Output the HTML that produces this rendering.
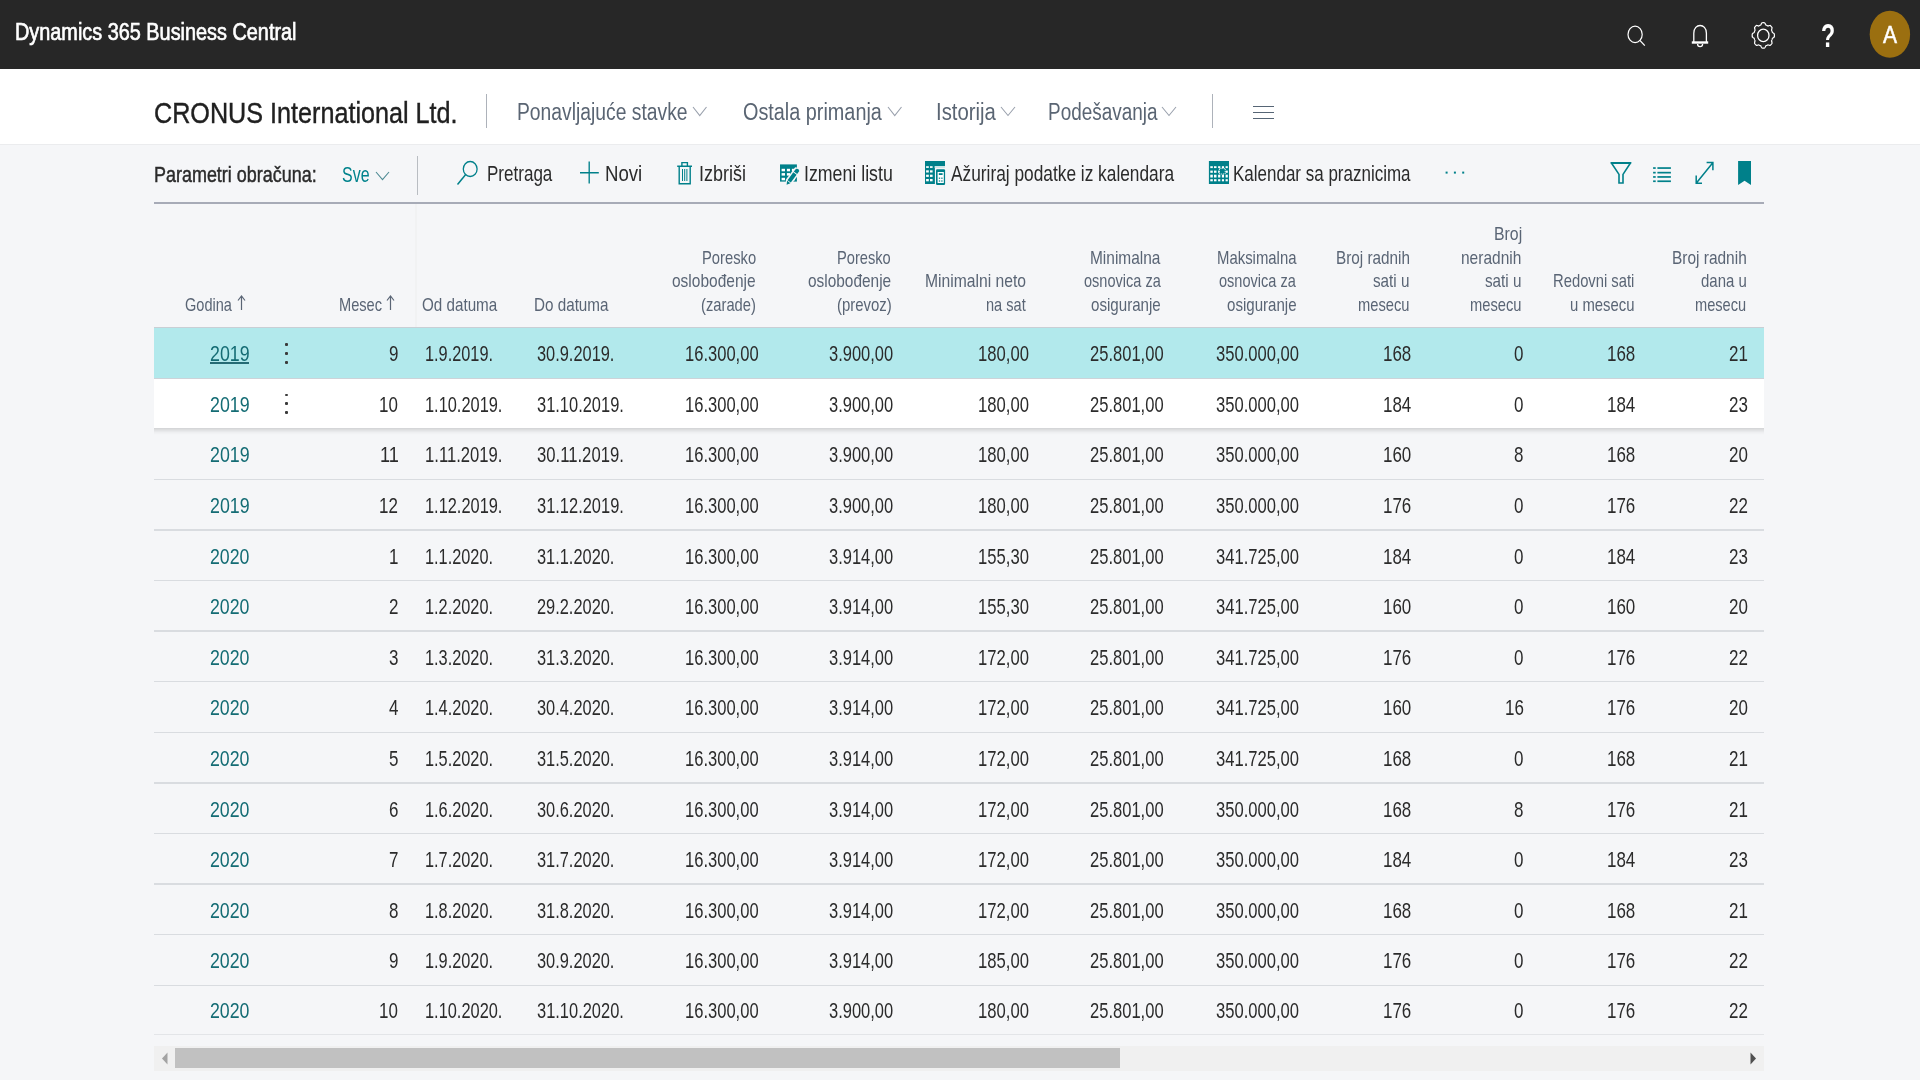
<!DOCTYPE html>
<html><head><meta charset="utf-8"><title>Dynamics 365 Business Central</title>
<style>
html,body{margin:0;padding:0;}
body{width:1920px;height:1080px;overflow:hidden;background:#f5f6f8;position:relative;font-family:"Liberation Sans",sans-serif;}
.t{filter:blur(0.4px);position:absolute;white-space:nowrap;line-height:1em;transform-origin:0 0;display:block;}
.r{position:absolute;display:block;}
svg.r{filter:blur(0.3px);}
</style></head><body>
<div class="r" style="left:0px;top:0px;width:1920px;height:69px;background:#272727;"></div>
<span class="t" style="left:15.41px;top:21px;font-size:23px;transform:scaleX(0.8635);color:#fff;-webkit-text-stroke:0.65px #fff;">Dynamics 365 Business Central</span>
<div class="r" style="left:0px;top:69px;width:1920px;height:75px;background:#ffffff;"></div>
<div class="r" style="left:0px;top:144px;width:1920px;height:1px;background:#ebecee;"></div>
<span class="t" style="left:153.94px;top:99px;font-size:29px;transform:scaleX(0.8679);color:#202020;-webkit-text-stroke:0.4px #202020;">CRONUS International Ltd.</span>
<div class="r" style="left:485.6px;top:94px;width:1.3px;height:34px;background:#adb2ba;"></div>
<div class="r" style="left:1211.9px;top:94px;width:1.3px;height:34px;background:#adb2ba;"></div>
<span class="t" style="left:517.26px;top:101px;font-size:23px;transform:scaleX(0.8391);color:#5a6573;">Ponavljajuće stavke</span>
<svg class="r" style="left:691.5px;top:106.3px" width="15.5" height="10.5"><polyline points="1,1 7.75,9.5 14.5,1" fill="none" stroke="#9aa1ad" stroke-width="1.1"/></svg>
<span class="t" style="left:743.11px;top:101px;font-size:23px;transform:scaleX(0.8621);color:#5a6573;">Ostala primanja</span>
<svg class="r" style="left:886.5px;top:106.3px" width="15.5" height="10.5"><polyline points="1,1 7.75,9.5 14.5,1" fill="none" stroke="#9aa1ad" stroke-width="1.1"/></svg>
<span class="t" style="left:935.67px;top:101px;font-size:23px;transform:scaleX(0.8825);color:#5a6573;">Istorija</span>
<svg class="r" style="left:999.5px;top:106.3px" width="16.0" height="10.5"><polyline points="1,1 8.0,9.5 15.0,1" fill="none" stroke="#9aa1ad" stroke-width="1.1"/></svg>
<span class="t" style="left:1047.98px;top:101px;font-size:23px;transform:scaleX(0.8234);color:#5a6573;">Podešavanja</span>
<svg class="r" style="left:1161px;top:106.3px" width="16" height="10.5"><polyline points="1,1 8.0,9.5 15,1" fill="none" stroke="#9aa1ad" stroke-width="1.1"/></svg>
<div class="r" style="left:1253px;top:105.8px;width:20.7px;height:1.4px;background:#566575;"></div>
<div class="r" style="left:1253px;top:111.7px;width:20.7px;height:1.4px;background:#566575;"></div>
<div class="r" style="left:1253px;top:117.8px;width:20.7px;height:1.4px;background:#566575;"></div>
<span class="t" style="left:153.56px;top:165px;font-size:21.5px;transform:scaleX(0.8350);color:#2b2b2b;-webkit-text-stroke:0.45px #2b2b2b;">Parametri obračuna:</span>
<span class="t" style="left:342.48px;top:165px;font-size:21.5px;transform:scaleX(0.7425);color:#00838c;">Sve</span>
<svg class="r" style="left:374.8px;top:171.2px" width="15.0" height="9.600000000000023"><polyline points="1,1 7.5,8.600000000000023 14.0,1" fill="none" stroke="#4f8b94" stroke-width="1.1"/></svg>
<div class="r" style="left:416.6px;top:156px;width:1.4px;height:39px;background:#b9bdc2;"></div>
<span class="t" style="left:486.64px;top:164px;font-size:21.5px;transform:scaleX(0.7922);color:#2b2b2b;">Pretraga</span>
<span class="t" style="left:604.51px;top:164px;font-size:21.5px;transform:scaleX(0.8662);color:#2b2b2b;">Novi</span>
<span class="t" style="left:698.98px;top:164px;font-size:21.5px;transform:scaleX(0.8374);color:#2b2b2b;">Izbriši</span>
<span class="t" style="left:803.60px;top:164px;font-size:21.5px;transform:scaleX(0.8256);color:#2b2b2b;">Izmeni listu</span>
<span class="t" style="left:950.70px;top:164px;font-size:21.5px;transform:scaleX(0.8046);color:#2b2b2b;">Ažuriraj podatke iz kalendara</span>
<span class="t" style="left:1233.14px;top:164px;font-size:21.5px;transform:scaleX(0.7903);color:#2b2b2b;">Kalendar sa praznicima</span>
<svg class="r" style="left:1600px;top:0px" width="320" height="69" viewBox="1600 0 320 69" preserveAspectRatio="none"><ellipse cx="1635.1" cy="34.4" rx="7.1" ry="8.2" fill="none" stroke="#ffffff" stroke-width="1.2"/><path d="M1639.9 40.4 L1644.8 45.6" stroke="#ffffff" stroke-width="1.3" fill="none"/><path d="M1693.8 42 V33.2 C1693.8 22.9 1706.4 22.9 1706.4 33.2 V42" fill="none" stroke="#ffffff" stroke-width="1.3"/><rect x="1691.8" y="41.3" width="16.4" height="2.4" fill="#ffffff"/><path d="M1697.6 44 C1697.6 47.4 1702.6 47.4 1702.6 44" fill="none" stroke="#ffffff" stroke-width="1.3"/><path d="M1763.30 22.70 L1763.74 22.71 L1764.17 22.74 L1764.60 22.79 L1764.98 23.27 L1765.30 23.88 L1765.59 24.49 L1765.86 25.01 L1766.22 25.13 L1766.57 25.27 L1766.91 25.43 L1767.25 25.60 L1767.58 25.78 L1767.91 25.98 L1768.42 25.84 L1769.00 25.63 L1769.61 25.47 L1770.17 25.43 L1770.51 25.74 L1770.83 26.07 L1771.15 26.42 L1771.45 26.78 L1771.74 27.15 L1772.02 27.54 L1771.98 28.18 L1771.84 28.87 L1771.66 29.54 L1771.53 30.13 L1771.71 30.50 L1771.87 30.88 L1772.02 31.27 L1772.15 31.66 L1772.27 32.06 L1772.38 32.47 L1772.83 32.78 L1773.37 33.11 L1773.90 33.48 L1774.32 33.91 L1774.37 34.40 L1774.39 34.90 L1774.40 35.40 L1774.39 35.90 L1774.37 36.40 L1774.32 36.89 L1773.90 37.32 L1773.37 37.69 L1772.83 38.02 L1772.38 38.33 L1772.27 38.74 L1772.15 39.14 L1772.02 39.53 L1771.87 39.92 L1771.71 40.30 L1771.53 40.67 L1771.66 41.26 L1771.84 41.93 L1771.98 42.62 L1772.02 43.26 L1771.74 43.65 L1771.45 44.02 L1771.15 44.38 L1770.83 44.73 L1770.51 45.06 L1770.17 45.37 L1769.61 45.33 L1769.00 45.17 L1768.42 44.96 L1767.91 44.82 L1767.58 45.02 L1767.25 45.20 L1766.91 45.37 L1766.57 45.53 L1766.22 45.67 L1765.86 45.79 L1765.59 46.31 L1765.30 46.92 L1764.98 47.53 L1764.60 48.01 L1764.17 48.06 L1763.74 48.09 L1763.30 48.10 L1762.86 48.09 L1762.43 48.06 L1762.00 48.01 L1761.62 47.53 L1761.30 46.92 L1761.01 46.31 L1760.74 45.79 L1760.38 45.67 L1760.03 45.53 L1759.69 45.37 L1759.35 45.20 L1759.02 45.02 L1758.69 44.82 L1758.18 44.96 L1757.60 45.17 L1756.99 45.33 L1756.43 45.37 L1756.09 45.06 L1755.77 44.73 L1755.45 44.38 L1755.15 44.02 L1754.86 43.65 L1754.58 43.26 L1754.62 42.62 L1754.76 41.93 L1754.94 41.26 L1755.07 40.67 L1754.89 40.30 L1754.73 39.92 L1754.58 39.53 L1754.45 39.14 L1754.33 38.74 L1754.22 38.33 L1753.77 38.02 L1753.23 37.69 L1752.70 37.32 L1752.28 36.89 L1752.23 36.40 L1752.21 35.90 L1752.20 35.40 L1752.21 34.90 L1752.23 34.40 L1752.28 33.91 L1752.70 33.48 L1753.23 33.11 L1753.77 32.78 L1754.22 32.47 L1754.33 32.06 L1754.45 31.66 L1754.58 31.27 L1754.73 30.88 L1754.89 30.50 L1755.07 30.13 L1754.94 29.54 L1754.76 28.87 L1754.62 28.18 L1754.58 27.54 L1754.86 27.15 L1755.15 26.78 L1755.45 26.42 L1755.77 26.07 L1756.09 25.74 L1756.43 25.43 L1756.99 25.47 L1757.60 25.63 L1758.18 25.84 L1758.69 25.98 L1759.02 25.78 L1759.35 25.60 L1759.69 25.43 L1760.03 25.27 L1760.38 25.13 L1760.74 25.01 L1761.01 24.49 L1761.30 23.88 L1761.62 23.27 L1762.00 22.79 L1762.43 22.74 L1762.86 22.71 Z" fill="none" stroke="#ffffff" stroke-width="1.2"/><ellipse cx="1763.3" cy="35.4" rx="5.7" ry="6.2" fill="none" stroke="#ffffff" stroke-width="1.3"/><ellipse cx="1889.9" cy="34.3" rx="20.2" ry="23.5" fill="#9b6f10"/></svg>
<svg class="r" style="left:440px;top:150px" width="1340" height="45" viewBox="440 150 1340 45" preserveAspectRatio="none"><ellipse cx="470.2" cy="169" rx="6.9" ry="7.5" fill="none" stroke="#00808a" stroke-width="1.3"/><path d="M465.5 174.8 L457.5 184.5" fill="none" stroke="#00808a" stroke-width="1.5"/><path d="M580 172.7 H598.8 M589.2 161.5 V183.6" fill="none" stroke="#00808a" stroke-width="1.35"/><path d="M677.2 166.3 H692 M681.9 166 V162.6 H687.4 V166 M679.2 166.5 V183.8 H690.2 V166.5" fill="none" stroke="#00808a" stroke-width="1.4"/><path d="M682.5 169 V181 M684.7 169 V181 M686.9 169 V181" fill="none" stroke="#00808a" stroke-width="1"/><rect x="780" y="164.4" width="16.9" height="17.2" fill="#00808a"/><rect x="781.6" y="168.8" width="3.40" height="2.50" fill="#ffffff"/><rect x="781.6" y="173.1" width="3.40" height="2.50" fill="#ffffff"/><rect x="781.6" y="177.8" width="3.40" height="2.50" fill="#ffffff"/><rect x="786.9" y="168.8" width="3.10" height="2.50" fill="#ffffff"/><rect x="786.9" y="173.1" width="3.10" height="2.50" fill="#ffffff"/><rect x="786.9" y="177.8" width="3.10" height="2.50" fill="#ffffff"/><rect x="791.9" y="168.8" width="3.10" height="2.50" fill="#ffffff"/><rect x="791.9" y="173.1" width="3.10" height="2.50" fill="#ffffff"/><rect x="791.9" y="177.8" width="3.10" height="2.50" fill="#ffffff"/><path d="M785.88 185.76 L791.63 184.05 L800.92 171.52 L799.11 167.94 L795.16 167.24 L785.86 179.77 Z" fill="#f5f6f8"/><path d="M786.60 184.80 L790.39 183.13 L787.10 180.69 Z M790.81 182.57 L796.59 174.78 L793.30 172.34 L787.52 180.13 Z M797.13 174.06 L799.33 171.09 L798.28 169.06 L796.04 168.64 L793.83 171.61 Z" fill="#00808a"/><rect x="925" y="161" width="20" height="23" fill="#00808a"/><rect x="926.1" y="166.2" width="2.70" height="1.70" fill="#ffffff"/><rect x="926.1" y="170.3" width="2.70" height="2.20" fill="#ffffff"/><rect x="926.1" y="174.7" width="2.70" height="2.20" fill="#ffffff"/><rect x="926.1" y="179" width="2.70" height="2.30" fill="#ffffff"/><rect x="930" y="166.2" width="2.60" height="1.70" fill="#ffffff"/><rect x="930" y="170.3" width="2.60" height="2.20" fill="#ffffff"/><rect x="930" y="174.7" width="2.60" height="2.20" fill="#ffffff"/><rect x="930" y="179" width="2.60" height="2.30" fill="#ffffff"/><rect x="934.6" y="166" width="10.4" height="2" fill="#cfe6e8"/><rect x="934.9" y="168" width="11" height="17.5" fill="#f5f6f8"/><rect x="936" y="169.2" width="9.1" height="15.8" rx="1.2" fill="#00808a"/><rect x="937.6" y="172" width="6.2" height="11" fill="#ffffff"/><rect x="938.8" y="173.2" width="3.8" height="1.8" fill="#00808a"/><rect x="938.8" y="177.6" width="1.40" height="1.20" fill="#00808a"/><rect x="938.8" y="180.4" width="1.40" height="1.20" fill="#00808a"/><rect x="941.2" y="177.6" width="1.40" height="1.20" fill="#00808a"/><rect x="941.2" y="180.4" width="1.40" height="1.20" fill="#00808a"/><rect x="1208.9" y="161" width="20.1" height="23" fill="#00808a"/><rect x="1210.3" y="166.2" width="2.50" height="1.90" fill="#ffffff"/><rect x="1210.3" y="170.6" width="2.50" height="2.20" fill="#ffffff"/><rect x="1210.3" y="174.7" width="2.50" height="2.80" fill="#ffffff"/><rect x="1210.3" y="179.2" width="2.50" height="2.10" fill="#ffffff"/><rect x="1214" y="166.2" width="2.50" height="1.90" fill="#ffffff"/><rect x="1214" y="170.6" width="2.50" height="2.20" fill="#ffffff"/><rect x="1214" y="174.7" width="2.50" height="2.80" fill="#ffffff"/><rect x="1214" y="179.2" width="2.50" height="2.10" fill="#ffffff"/><rect x="1218.1" y="166.2" width="2.20" height="1.90" fill="#ffffff"/><rect x="1218.1" y="170.6" width="2.20" height="2.20" fill="#ffffff"/><rect x="1218.1" y="174.7" width="2.20" height="2.80" fill="#ffffff"/><rect x="1218.1" y="179.2" width="2.20" height="2.10" fill="#ffffff"/><rect x="1221.9" y="166.2" width="2.10" height="1.90" fill="#ffffff"/><rect x="1221.9" y="170.6" width="2.10" height="2.20" fill="#ffffff"/><rect x="1221.9" y="174.7" width="2.10" height="2.80" fill="#ffffff"/><rect x="1221.9" y="179.2" width="2.10" height="2.10" fill="#ffffff"/><rect x="1225.6" y="166.2" width="2.20" height="1.90" fill="#ffffff"/><rect x="1225.6" y="170.6" width="2.20" height="2.20" fill="#ffffff"/><rect x="1225.6" y="174.7" width="2.20" height="2.80" fill="#ffffff"/><rect x="1225.6" y="179.2" width="2.20" height="2.10" fill="#ffffff"/><rect x="1219.4" y="168.4" width="5.8" height="5.6" fill="#00808a" stroke="#ffffff" stroke-width="0.9" stroke-dasharray="1.2 0.9"/><rect x="1445.6" y="171.6" width="2" height="2" fill="#00808a"/><rect x="1453.9" y="171.6" width="2" height="2" fill="#00808a"/><rect x="1462.2" y="171.6" width="2" height="2" fill="#00808a"/><path d="M1611.6 163.2 H1630.3 L1623 174.4 V183 H1619 V174.4 Z" fill="none" stroke="#00808a" stroke-width="1.6" stroke-linejoin="miter"/><rect x="1610.8" y="162" width="20.3" height="2" fill="#00808a"/><rect x="1653.1" y="167.2" width="2.6" height="1.7" fill="#00808a"/><rect x="1657.4" y="167.2" width="13.5" height="1.7" fill="#00808a"/><rect x="1653.1" y="171.79999999999998" width="2.6" height="1.7" fill="#00808a"/><rect x="1657.4" y="171.79999999999998" width="13.5" height="1.7" fill="#00808a"/><rect x="1653.1" y="176.1" width="2.6" height="1.7" fill="#00808a"/><rect x="1657.4" y="176.1" width="13.5" height="1.7" fill="#00808a"/><rect x="1653.1" y="180.39999999999998" width="2.6" height="1.7" fill="#00808a"/><rect x="1657.4" y="180.39999999999998" width="13.5" height="1.7" fill="#00808a"/><path d="M1696.4 183 L1712.8 162.7 M1706.6 162.6 H1712.9 V170.2 M1696.2 175.6 V183.2 H1702" fill="none" stroke="#00808a" stroke-width="1.5"/><path d="M1738.1 161 H1751 V185 L1744.55 180.8 L1738.1 185 Z" fill="#00808a"/></svg>
<span class="t" style="left:1820.96px;top:20px;font-size:32.5px;transform:scaleX(0.7119);font-weight:bold;color:#fff;">?</span>
<span class="t" style="left:1882.60px;top:23px;font-size:24px;transform:scaleX(0.8772);color:#fff;-webkit-text-stroke:0.5px #fff;">A</span>
<div class="r" style="left:154px;top:202px;width:1610px;height:2px;background:#a7abb7;"></div>
<span class="t" style="left:185.07px;top:295px;font-size:19px;transform:scaleX(0.7659);color:#5a6575;">Godina</span>
<span class="t" style="left:339.33px;top:295px;font-size:19px;transform:scaleX(0.7691);color:#5a6575;">Mesec</span>
<span class="t" style="left:422.32px;top:295px;font-size:19px;transform:scaleX(0.8005);color:#5a6575;">Od datuma</span>
<span class="t" style="left:534.28px;top:295px;font-size:19px;transform:scaleX(0.8016);color:#5a6575;">Do datuma</span>
<svg class="r" style="left:236.8px;top:295px" width="9" height="16"><path d="M4.5 1 V15 M1 5.5 L4.5 1 L8 5.5" fill="none" stroke="#5a6575" stroke-width="1.2"/></svg>
<svg class="r" style="left:385.8px;top:295px" width="9" height="16"><path d="M4.5 1 V15 M1 5.5 L4.5 1 L8 5.5" fill="none" stroke="#5a6575" stroke-width="1.2"/></svg>
<span class="t" style="left:701.82px;top:248px;font-size:19px;transform:scaleX(0.7759);color:#5a6575;">Poresko</span>
<span class="t" style="left:672.38px;top:271px;font-size:19px;transform:scaleX(0.8157);color:#5a6575;">oslobođenje</span>
<span class="t" style="left:701.32px;top:295px;font-size:19px;transform:scaleX(0.7758);color:#5a6575;">(zarade)</span>
<span class="t" style="left:837.43px;top:248px;font-size:19px;transform:scaleX(0.7715);color:#5a6575;">Poresko</span>
<span class="t" style="left:808.08px;top:271px;font-size:19px;transform:scaleX(0.8118);color:#5a6575;">oslobođenje</span>
<span class="t" style="left:836.70px;top:295px;font-size:19px;transform:scaleX(0.7863);color:#5a6575;">(prevoz)</span>
<span class="t" style="left:925.05px;top:271px;font-size:19px;transform:scaleX(0.8251);color:#5a6575;">Minimalni neto</span>
<span class="t" style="left:985.85px;top:295px;font-size:19px;transform:scaleX(0.7672);color:#5a6575;">na sat</span>
<span class="t" style="left:1090.06px;top:248px;font-size:19px;transform:scaleX(0.8134);color:#5a6575;">Minimalna</span>
<span class="t" style="left:1083.72px;top:271px;font-size:19px;transform:scaleX(0.7650);color:#5a6575;">osnovica za</span>
<span class="t" style="left:1091.40px;top:295px;font-size:19px;transform:scaleX(0.7959);color:#5a6575;">osiguranje</span>
<span class="t" style="left:1216.81px;top:248px;font-size:19px;transform:scaleX(0.7838);color:#5a6575;">Maksimalna</span>
<span class="t" style="left:1219.42px;top:271px;font-size:19px;transform:scaleX(0.7660);color:#5a6575;">osnovica za</span>
<span class="t" style="left:1227.40px;top:295px;font-size:19px;transform:scaleX(0.7935);color:#5a6575;">osiguranje</span>
<span class="t" style="left:1335.78px;top:248px;font-size:19px;transform:scaleX(0.8053);color:#5a6575;">Broj radnih</span>
<span class="t" style="left:1373.38px;top:271px;font-size:19px;transform:scaleX(0.8018);color:#5a6575;">sati u</span>
<span class="t" style="left:1358.35px;top:295px;font-size:19px;transform:scaleX(0.7731);color:#5a6575;">mesecu</span>
<span class="t" style="left:1493.73px;top:224px;font-size:19px;transform:scaleX(0.8331);color:#5a6575;">Broj</span>
<span class="t" style="left:1461.49px;top:248px;font-size:19px;transform:scaleX(0.8155);color:#5a6575;">neradnih</span>
<span class="t" style="left:1485.38px;top:271px;font-size:19px;transform:scaleX(0.8018);color:#5a6575;">sati u</span>
<span class="t" style="left:1470.35px;top:295px;font-size:19px;transform:scaleX(0.7731);color:#5a6575;">mesecu</span>
<span class="t" style="left:1552.62px;top:271px;font-size:19px;transform:scaleX(0.7784);color:#5a6575;">Redovni sati</span>
<span class="t" style="left:1569.57px;top:295px;font-size:19px;transform:scaleX(0.7818);color:#5a6575;">u mesecu</span>
<span class="t" style="left:1671.76px;top:248px;font-size:19px;transform:scaleX(0.8132);color:#5a6575;">Broj radnih</span>
<span class="t" style="left:1700.70px;top:271px;font-size:19px;transform:scaleX(0.7879);color:#5a6575;">dana u</span>
<span class="t" style="left:1695.35px;top:295px;font-size:19px;transform:scaleX(0.7684);color:#5a6575;">mesecu</span>
<div class="r" style="left:415.1px;top:204px;width:2.1px;height:123px;background:#f1f2f3;"></div>
<div class="r" style="left:154px;top:326.8px;width:1610px;height:1px;background:#c9cfd5;"></div>
<div class="r" style="left:154px;top:328px;width:1610px;height:50px;background:#b2e9ec;"></div>
<div class="r" style="left:154px;top:378px;width:1610px;height:1px;background:#cdd3d9;"></div>
<div class="r" style="left:154px;top:379px;width:1610px;height:64px;overflow:hidden"><div class="r" style="left:-20px;top:0;width:1650px;height:49px;background:#fff;box-shadow:0 2px 5px rgba(0,0,0,0.18)"></div></div>
<span class="t" style="left:210.11px;top:344px;font-size:21.5px;transform:scaleX(0.8286);color:#146c74;">2019</span>
<span class="t" style="left:388.85px;top:344px;font-size:21.5px;transform:scaleX(0.7886);color:#2b2b2b;">9</span>
<span class="t" style="left:424.58px;top:344px;font-size:21.5px;transform:scaleX(0.7581);color:#2b2b2b;">1.9.2019.</span>
<span class="t" style="left:536.99px;top:344px;font-size:21.5px;transform:scaleX(0.7617);color:#2b2b2b;">30.9.2019.</span>
<span class="t" style="left:685.03px;top:344px;font-size:21.5px;transform:scaleX(0.7696);color:#2b2b2b;">16.300,00</span>
<span class="t" style="left:829.44px;top:344px;font-size:21.5px;transform:scaleX(0.7668);color:#2b2b2b;">3.900,00</span>
<span class="t" style="left:977.69px;top:344px;font-size:21.5px;transform:scaleX(0.7748);color:#2b2b2b;">180,00</span>
<span class="t" style="left:1090.03px;top:344px;font-size:21.5px;transform:scaleX(0.7696);color:#2b2b2b;">25.801,00</span>
<span class="t" style="left:1216.38px;top:344px;font-size:21.5px;transform:scaleX(0.7717);color:#2b2b2b;">350.000,00</span>
<span class="t" style="left:1383.21px;top:344px;font-size:21.5px;transform:scaleX(0.7886);color:#2b2b2b;">168</span>
<span class="t" style="left:1514.23px;top:344px;font-size:21.5px;transform:scaleX(0.7886);color:#2b2b2b;">0</span>
<span class="t" style="left:1607.41px;top:344px;font-size:21.5px;transform:scaleX(0.7886);color:#2b2b2b;">168</span>
<span class="t" style="left:1728.99px;top:344px;font-size:21.5px;transform:scaleX(0.7886);color:#2b2b2b;">21</span>
<span class="t" style="left:210.11px;top:395px;font-size:21.5px;transform:scaleX(0.8286);color:#146c74;">2019</span>
<span class="t" style="left:379.32px;top:395px;font-size:21.5px;transform:scaleX(0.7886);color:#2b2b2b;">10</span>
<span class="t" style="left:424.57px;top:395px;font-size:21.5px;transform:scaleX(0.7617);color:#2b2b2b;">1.10.2019.</span>
<span class="t" style="left:536.98px;top:395px;font-size:21.5px;transform:scaleX(0.7646);color:#2b2b2b;">31.10.2019.</span>
<span class="t" style="left:685.03px;top:395px;font-size:21.5px;transform:scaleX(0.7696);color:#2b2b2b;">16.300,00</span>
<span class="t" style="left:829.44px;top:395px;font-size:21.5px;transform:scaleX(0.7668);color:#2b2b2b;">3.900,00</span>
<span class="t" style="left:977.69px;top:395px;font-size:21.5px;transform:scaleX(0.7748);color:#2b2b2b;">180,00</span>
<span class="t" style="left:1090.03px;top:395px;font-size:21.5px;transform:scaleX(0.7696);color:#2b2b2b;">25.801,00</span>
<span class="t" style="left:1216.38px;top:395px;font-size:21.5px;transform:scaleX(0.7717);color:#2b2b2b;">350.000,00</span>
<span class="t" style="left:1382.99px;top:395px;font-size:21.5px;transform:scaleX(0.7886);color:#2b2b2b;">184</span>
<span class="t" style="left:1514.23px;top:395px;font-size:21.5px;transform:scaleX(0.7886);color:#2b2b2b;">0</span>
<span class="t" style="left:1607.19px;top:395px;font-size:21.5px;transform:scaleX(0.7886);color:#2b2b2b;">184</span>
<span class="t" style="left:1728.90px;top:395px;font-size:21.5px;transform:scaleX(0.7886);color:#2b2b2b;">23</span>
<div class="r" style="left:154px;top:478.65px;width:1610px;height:1.3px;background:#d9dce0;"></div>
<span class="t" style="left:210.11px;top:445px;font-size:21.5px;transform:scaleX(0.8286);color:#146c74;">2019</span>
<span class="t" style="left:379.51px;top:445px;font-size:21.5px;transform:scaleX(0.8450);color:#2b2b2b;">11</span>
<span class="t" style="left:424.55px;top:445px;font-size:21.5px;transform:scaleX(0.7739);color:#2b2b2b;">1.11.2019.</span>
<span class="t" style="left:536.97px;top:445px;font-size:21.5px;transform:scaleX(0.7754);color:#2b2b2b;">30.11.2019.</span>
<span class="t" style="left:685.03px;top:445px;font-size:21.5px;transform:scaleX(0.7696);color:#2b2b2b;">16.300,00</span>
<span class="t" style="left:829.44px;top:445px;font-size:21.5px;transform:scaleX(0.7668);color:#2b2b2b;">3.900,00</span>
<span class="t" style="left:977.69px;top:445px;font-size:21.5px;transform:scaleX(0.7748);color:#2b2b2b;">180,00</span>
<span class="t" style="left:1090.03px;top:445px;font-size:21.5px;transform:scaleX(0.7696);color:#2b2b2b;">25.801,00</span>
<span class="t" style="left:1216.38px;top:445px;font-size:21.5px;transform:scaleX(0.7717);color:#2b2b2b;">350.000,00</span>
<span class="t" style="left:1383.16px;top:445px;font-size:21.5px;transform:scaleX(0.7886);color:#2b2b2b;">160</span>
<span class="t" style="left:1514.27px;top:445px;font-size:21.5px;transform:scaleX(0.7886);color:#2b2b2b;">8</span>
<span class="t" style="left:1607.41px;top:445px;font-size:21.5px;transform:scaleX(0.7886);color:#2b2b2b;">168</span>
<span class="t" style="left:1728.82px;top:445px;font-size:21.5px;transform:scaleX(0.7886);color:#2b2b2b;">20</span>
<div class="r" style="left:154px;top:529.25px;width:1610px;height:1.3px;background:#d9dce0;"></div>
<span class="t" style="left:210.11px;top:496px;font-size:21.5px;transform:scaleX(0.8286);color:#146c74;">2019</span>
<span class="t" style="left:379.49px;top:496px;font-size:21.5px;transform:scaleX(0.7886);color:#2b2b2b;">12</span>
<span class="t" style="left:424.57px;top:496px;font-size:21.5px;transform:scaleX(0.7617);color:#2b2b2b;">1.12.2019.</span>
<span class="t" style="left:536.98px;top:496px;font-size:21.5px;transform:scaleX(0.7646);color:#2b2b2b;">31.12.2019.</span>
<span class="t" style="left:685.03px;top:496px;font-size:21.5px;transform:scaleX(0.7696);color:#2b2b2b;">16.300,00</span>
<span class="t" style="left:829.44px;top:496px;font-size:21.5px;transform:scaleX(0.7668);color:#2b2b2b;">3.900,00</span>
<span class="t" style="left:977.69px;top:496px;font-size:21.5px;transform:scaleX(0.7748);color:#2b2b2b;">180,00</span>
<span class="t" style="left:1090.03px;top:496px;font-size:21.5px;transform:scaleX(0.7696);color:#2b2b2b;">25.801,00</span>
<span class="t" style="left:1216.38px;top:496px;font-size:21.5px;transform:scaleX(0.7717);color:#2b2b2b;">350.000,00</span>
<span class="t" style="left:1383.25px;top:496px;font-size:21.5px;transform:scaleX(0.7886);color:#2b2b2b;">176</span>
<span class="t" style="left:1514.23px;top:496px;font-size:21.5px;transform:scaleX(0.7886);color:#2b2b2b;">0</span>
<span class="t" style="left:1607.45px;top:496px;font-size:21.5px;transform:scaleX(0.7886);color:#2b2b2b;">176</span>
<span class="t" style="left:1728.99px;top:496px;font-size:21.5px;transform:scaleX(0.7886);color:#2b2b2b;">22</span>
<div class="r" style="left:154px;top:579.85px;width:1610px;height:1.3px;background:#d9dce0;"></div>
<span class="t" style="left:210.11px;top:547px;font-size:21.5px;transform:scaleX(0.8257);color:#146c74;">2020</span>
<span class="t" style="left:388.90px;top:547px;font-size:21.5px;transform:scaleX(0.7886);color:#2b2b2b;">1</span>
<span class="t" style="left:424.58px;top:547px;font-size:21.5px;transform:scaleX(0.7581);color:#2b2b2b;">1.1.2020.</span>
<span class="t" style="left:536.99px;top:547px;font-size:21.5px;transform:scaleX(0.7617);color:#2b2b2b;">31.1.2020.</span>
<span class="t" style="left:685.03px;top:547px;font-size:21.5px;transform:scaleX(0.7696);color:#2b2b2b;">16.300,00</span>
<span class="t" style="left:829.44px;top:547px;font-size:21.5px;transform:scaleX(0.7668);color:#2b2b2b;">3.914,00</span>
<span class="t" style="left:977.69px;top:547px;font-size:21.5px;transform:scaleX(0.7748);color:#2b2b2b;">155,30</span>
<span class="t" style="left:1090.03px;top:547px;font-size:21.5px;transform:scaleX(0.7696);color:#2b2b2b;">25.801,00</span>
<span class="t" style="left:1216.38px;top:547px;font-size:21.5px;transform:scaleX(0.7717);color:#2b2b2b;">341.725,00</span>
<span class="t" style="left:1382.99px;top:547px;font-size:21.5px;transform:scaleX(0.7886);color:#2b2b2b;">184</span>
<span class="t" style="left:1514.23px;top:547px;font-size:21.5px;transform:scaleX(0.7886);color:#2b2b2b;">0</span>
<span class="t" style="left:1607.19px;top:547px;font-size:21.5px;transform:scaleX(0.7886);color:#2b2b2b;">184</span>
<span class="t" style="left:1728.90px;top:547px;font-size:21.5px;transform:scaleX(0.7886);color:#2b2b2b;">23</span>
<div class="r" style="left:154px;top:630.45px;width:1610px;height:1.3px;background:#d9dce0;"></div>
<span class="t" style="left:210.11px;top:597px;font-size:21.5px;transform:scaleX(0.8257);color:#146c74;">2020</span>
<span class="t" style="left:388.90px;top:597px;font-size:21.5px;transform:scaleX(0.7886);color:#2b2b2b;">2</span>
<span class="t" style="left:424.58px;top:597px;font-size:21.5px;transform:scaleX(0.7581);color:#2b2b2b;">1.2.2020.</span>
<span class="t" style="left:536.78px;top:597px;font-size:21.5px;transform:scaleX(0.7617);color:#2b2b2b;">29.2.2020.</span>
<span class="t" style="left:685.03px;top:597px;font-size:21.5px;transform:scaleX(0.7696);color:#2b2b2b;">16.300,00</span>
<span class="t" style="left:829.44px;top:597px;font-size:21.5px;transform:scaleX(0.7668);color:#2b2b2b;">3.914,00</span>
<span class="t" style="left:977.69px;top:597px;font-size:21.5px;transform:scaleX(0.7748);color:#2b2b2b;">155,30</span>
<span class="t" style="left:1090.03px;top:597px;font-size:21.5px;transform:scaleX(0.7696);color:#2b2b2b;">25.801,00</span>
<span class="t" style="left:1216.38px;top:597px;font-size:21.5px;transform:scaleX(0.7717);color:#2b2b2b;">341.725,00</span>
<span class="t" style="left:1383.16px;top:597px;font-size:21.5px;transform:scaleX(0.7886);color:#2b2b2b;">160</span>
<span class="t" style="left:1514.23px;top:597px;font-size:21.5px;transform:scaleX(0.7886);color:#2b2b2b;">0</span>
<span class="t" style="left:1607.36px;top:597px;font-size:21.5px;transform:scaleX(0.7886);color:#2b2b2b;">160</span>
<span class="t" style="left:1728.82px;top:597px;font-size:21.5px;transform:scaleX(0.7886);color:#2b2b2b;">20</span>
<div class="r" style="left:154px;top:681.05px;width:1610px;height:1.3px;background:#d9dce0;"></div>
<span class="t" style="left:210.11px;top:648px;font-size:21.5px;transform:scaleX(0.8257);color:#146c74;">2020</span>
<span class="t" style="left:388.81px;top:648px;font-size:21.5px;transform:scaleX(0.7886);color:#2b2b2b;">3</span>
<span class="t" style="left:424.58px;top:648px;font-size:21.5px;transform:scaleX(0.7581);color:#2b2b2b;">1.3.2020.</span>
<span class="t" style="left:536.99px;top:648px;font-size:21.5px;transform:scaleX(0.7617);color:#2b2b2b;">31.3.2020.</span>
<span class="t" style="left:685.03px;top:648px;font-size:21.5px;transform:scaleX(0.7696);color:#2b2b2b;">16.300,00</span>
<span class="t" style="left:829.44px;top:648px;font-size:21.5px;transform:scaleX(0.7668);color:#2b2b2b;">3.914,00</span>
<span class="t" style="left:977.69px;top:648px;font-size:21.5px;transform:scaleX(0.7748);color:#2b2b2b;">172,00</span>
<span class="t" style="left:1090.03px;top:648px;font-size:21.5px;transform:scaleX(0.7696);color:#2b2b2b;">25.801,00</span>
<span class="t" style="left:1216.38px;top:648px;font-size:21.5px;transform:scaleX(0.7717);color:#2b2b2b;">341.725,00</span>
<span class="t" style="left:1383.25px;top:648px;font-size:21.5px;transform:scaleX(0.7886);color:#2b2b2b;">176</span>
<span class="t" style="left:1514.23px;top:648px;font-size:21.5px;transform:scaleX(0.7886);color:#2b2b2b;">0</span>
<span class="t" style="left:1607.45px;top:648px;font-size:21.5px;transform:scaleX(0.7886);color:#2b2b2b;">176</span>
<span class="t" style="left:1728.99px;top:648px;font-size:21.5px;transform:scaleX(0.7886);color:#2b2b2b;">22</span>
<div class="r" style="left:154px;top:731.65px;width:1610px;height:1.3px;background:#d9dce0;"></div>
<span class="t" style="left:210.11px;top:698px;font-size:21.5px;transform:scaleX(0.8257);color:#146c74;">2020</span>
<span class="t" style="left:388.56px;top:698px;font-size:21.5px;transform:scaleX(0.7886);color:#2b2b2b;">4</span>
<span class="t" style="left:424.58px;top:698px;font-size:21.5px;transform:scaleX(0.7581);color:#2b2b2b;">1.4.2020.</span>
<span class="t" style="left:536.99px;top:698px;font-size:21.5px;transform:scaleX(0.7617);color:#2b2b2b;">30.4.2020.</span>
<span class="t" style="left:685.03px;top:698px;font-size:21.5px;transform:scaleX(0.7696);color:#2b2b2b;">16.300,00</span>
<span class="t" style="left:829.44px;top:698px;font-size:21.5px;transform:scaleX(0.7668);color:#2b2b2b;">3.914,00</span>
<span class="t" style="left:977.69px;top:698px;font-size:21.5px;transform:scaleX(0.7748);color:#2b2b2b;">172,00</span>
<span class="t" style="left:1090.03px;top:698px;font-size:21.5px;transform:scaleX(0.7696);color:#2b2b2b;">25.801,00</span>
<span class="t" style="left:1216.38px;top:698px;font-size:21.5px;transform:scaleX(0.7717);color:#2b2b2b;">341.725,00</span>
<span class="t" style="left:1383.16px;top:698px;font-size:21.5px;transform:scaleX(0.7886);color:#2b2b2b;">160</span>
<span class="t" style="left:1504.90px;top:698px;font-size:21.5px;transform:scaleX(0.7886);color:#2b2b2b;">16</span>
<span class="t" style="left:1607.45px;top:698px;font-size:21.5px;transform:scaleX(0.7886);color:#2b2b2b;">176</span>
<span class="t" style="left:1728.82px;top:698px;font-size:21.5px;transform:scaleX(0.7886);color:#2b2b2b;">20</span>
<div class="r" style="left:154px;top:782.25px;width:1610px;height:1.3px;background:#d9dce0;"></div>
<span class="t" style="left:210.11px;top:749px;font-size:21.5px;transform:scaleX(0.8257);color:#146c74;">2020</span>
<span class="t" style="left:388.77px;top:749px;font-size:21.5px;transform:scaleX(0.7886);color:#2b2b2b;">5</span>
<span class="t" style="left:424.58px;top:749px;font-size:21.5px;transform:scaleX(0.7581);color:#2b2b2b;">1.5.2020.</span>
<span class="t" style="left:536.99px;top:749px;font-size:21.5px;transform:scaleX(0.7617);color:#2b2b2b;">31.5.2020.</span>
<span class="t" style="left:685.03px;top:749px;font-size:21.5px;transform:scaleX(0.7696);color:#2b2b2b;">16.300,00</span>
<span class="t" style="left:829.44px;top:749px;font-size:21.5px;transform:scaleX(0.7668);color:#2b2b2b;">3.914,00</span>
<span class="t" style="left:977.69px;top:749px;font-size:21.5px;transform:scaleX(0.7748);color:#2b2b2b;">172,00</span>
<span class="t" style="left:1090.03px;top:749px;font-size:21.5px;transform:scaleX(0.7696);color:#2b2b2b;">25.801,00</span>
<span class="t" style="left:1216.38px;top:749px;font-size:21.5px;transform:scaleX(0.7717);color:#2b2b2b;">341.725,00</span>
<span class="t" style="left:1383.21px;top:749px;font-size:21.5px;transform:scaleX(0.7886);color:#2b2b2b;">168</span>
<span class="t" style="left:1514.23px;top:749px;font-size:21.5px;transform:scaleX(0.7886);color:#2b2b2b;">0</span>
<span class="t" style="left:1607.41px;top:749px;font-size:21.5px;transform:scaleX(0.7886);color:#2b2b2b;">168</span>
<span class="t" style="left:1728.99px;top:749px;font-size:21.5px;transform:scaleX(0.7886);color:#2b2b2b;">21</span>
<div class="r" style="left:154px;top:832.85px;width:1610px;height:1.3px;background:#d9dce0;"></div>
<span class="t" style="left:210.11px;top:800px;font-size:21.5px;transform:scaleX(0.8257);color:#146c74;">2020</span>
<span class="t" style="left:388.81px;top:800px;font-size:21.5px;transform:scaleX(0.7886);color:#2b2b2b;">6</span>
<span class="t" style="left:424.58px;top:800px;font-size:21.5px;transform:scaleX(0.7581);color:#2b2b2b;">1.6.2020.</span>
<span class="t" style="left:536.99px;top:800px;font-size:21.5px;transform:scaleX(0.7617);color:#2b2b2b;">30.6.2020.</span>
<span class="t" style="left:685.03px;top:800px;font-size:21.5px;transform:scaleX(0.7696);color:#2b2b2b;">16.300,00</span>
<span class="t" style="left:829.44px;top:800px;font-size:21.5px;transform:scaleX(0.7668);color:#2b2b2b;">3.914,00</span>
<span class="t" style="left:977.69px;top:800px;font-size:21.5px;transform:scaleX(0.7748);color:#2b2b2b;">172,00</span>
<span class="t" style="left:1090.03px;top:800px;font-size:21.5px;transform:scaleX(0.7696);color:#2b2b2b;">25.801,00</span>
<span class="t" style="left:1216.38px;top:800px;font-size:21.5px;transform:scaleX(0.7717);color:#2b2b2b;">350.000,00</span>
<span class="t" style="left:1383.21px;top:800px;font-size:21.5px;transform:scaleX(0.7886);color:#2b2b2b;">168</span>
<span class="t" style="left:1514.27px;top:800px;font-size:21.5px;transform:scaleX(0.7886);color:#2b2b2b;">8</span>
<span class="t" style="left:1607.45px;top:800px;font-size:21.5px;transform:scaleX(0.7886);color:#2b2b2b;">176</span>
<span class="t" style="left:1728.99px;top:800px;font-size:21.5px;transform:scaleX(0.7886);color:#2b2b2b;">21</span>
<div class="r" style="left:154px;top:883.45px;width:1610px;height:1.3px;background:#d9dce0;"></div>
<span class="t" style="left:210.11px;top:850px;font-size:21.5px;transform:scaleX(0.8257);color:#146c74;">2020</span>
<span class="t" style="left:388.90px;top:850px;font-size:21.5px;transform:scaleX(0.7886);color:#2b2b2b;">7</span>
<span class="t" style="left:424.58px;top:850px;font-size:21.5px;transform:scaleX(0.7581);color:#2b2b2b;">1.7.2020.</span>
<span class="t" style="left:536.99px;top:850px;font-size:21.5px;transform:scaleX(0.7617);color:#2b2b2b;">31.7.2020.</span>
<span class="t" style="left:685.03px;top:850px;font-size:21.5px;transform:scaleX(0.7696);color:#2b2b2b;">16.300,00</span>
<span class="t" style="left:829.44px;top:850px;font-size:21.5px;transform:scaleX(0.7668);color:#2b2b2b;">3.914,00</span>
<span class="t" style="left:977.69px;top:850px;font-size:21.5px;transform:scaleX(0.7748);color:#2b2b2b;">172,00</span>
<span class="t" style="left:1090.03px;top:850px;font-size:21.5px;transform:scaleX(0.7696);color:#2b2b2b;">25.801,00</span>
<span class="t" style="left:1216.38px;top:850px;font-size:21.5px;transform:scaleX(0.7717);color:#2b2b2b;">350.000,00</span>
<span class="t" style="left:1382.99px;top:850px;font-size:21.5px;transform:scaleX(0.7886);color:#2b2b2b;">184</span>
<span class="t" style="left:1514.23px;top:850px;font-size:21.5px;transform:scaleX(0.7886);color:#2b2b2b;">0</span>
<span class="t" style="left:1607.19px;top:850px;font-size:21.5px;transform:scaleX(0.7886);color:#2b2b2b;">184</span>
<span class="t" style="left:1728.90px;top:850px;font-size:21.5px;transform:scaleX(0.7886);color:#2b2b2b;">23</span>
<div class="r" style="left:154px;top:934.05px;width:1610px;height:1.3px;background:#d9dce0;"></div>
<span class="t" style="left:210.11px;top:901px;font-size:21.5px;transform:scaleX(0.8257);color:#146c74;">2020</span>
<span class="t" style="left:388.77px;top:901px;font-size:21.5px;transform:scaleX(0.7886);color:#2b2b2b;">8</span>
<span class="t" style="left:424.58px;top:901px;font-size:21.5px;transform:scaleX(0.7581);color:#2b2b2b;">1.8.2020.</span>
<span class="t" style="left:536.99px;top:901px;font-size:21.5px;transform:scaleX(0.7617);color:#2b2b2b;">31.8.2020.</span>
<span class="t" style="left:685.03px;top:901px;font-size:21.5px;transform:scaleX(0.7696);color:#2b2b2b;">16.300,00</span>
<span class="t" style="left:829.44px;top:901px;font-size:21.5px;transform:scaleX(0.7668);color:#2b2b2b;">3.914,00</span>
<span class="t" style="left:977.69px;top:901px;font-size:21.5px;transform:scaleX(0.7748);color:#2b2b2b;">172,00</span>
<span class="t" style="left:1090.03px;top:901px;font-size:21.5px;transform:scaleX(0.7696);color:#2b2b2b;">25.801,00</span>
<span class="t" style="left:1216.38px;top:901px;font-size:21.5px;transform:scaleX(0.7717);color:#2b2b2b;">350.000,00</span>
<span class="t" style="left:1383.21px;top:901px;font-size:21.5px;transform:scaleX(0.7886);color:#2b2b2b;">168</span>
<span class="t" style="left:1514.23px;top:901px;font-size:21.5px;transform:scaleX(0.7886);color:#2b2b2b;">0</span>
<span class="t" style="left:1607.41px;top:901px;font-size:21.5px;transform:scaleX(0.7886);color:#2b2b2b;">168</span>
<span class="t" style="left:1728.99px;top:901px;font-size:21.5px;transform:scaleX(0.7886);color:#2b2b2b;">21</span>
<div class="r" style="left:154px;top:984.65px;width:1610px;height:1.3px;background:#d9dce0;"></div>
<span class="t" style="left:210.11px;top:951px;font-size:21.5px;transform:scaleX(0.8257);color:#146c74;">2020</span>
<span class="t" style="left:388.85px;top:951px;font-size:21.5px;transform:scaleX(0.7886);color:#2b2b2b;">9</span>
<span class="t" style="left:424.58px;top:951px;font-size:21.5px;transform:scaleX(0.7581);color:#2b2b2b;">1.9.2020.</span>
<span class="t" style="left:536.99px;top:951px;font-size:21.5px;transform:scaleX(0.7617);color:#2b2b2b;">30.9.2020.</span>
<span class="t" style="left:685.03px;top:951px;font-size:21.5px;transform:scaleX(0.7696);color:#2b2b2b;">16.300,00</span>
<span class="t" style="left:829.44px;top:951px;font-size:21.5px;transform:scaleX(0.7668);color:#2b2b2b;">3.914,00</span>
<span class="t" style="left:977.69px;top:951px;font-size:21.5px;transform:scaleX(0.7748);color:#2b2b2b;">185,00</span>
<span class="t" style="left:1090.03px;top:951px;font-size:21.5px;transform:scaleX(0.7696);color:#2b2b2b;">25.801,00</span>
<span class="t" style="left:1216.38px;top:951px;font-size:21.5px;transform:scaleX(0.7717);color:#2b2b2b;">350.000,00</span>
<span class="t" style="left:1383.25px;top:951px;font-size:21.5px;transform:scaleX(0.7886);color:#2b2b2b;">176</span>
<span class="t" style="left:1514.23px;top:951px;font-size:21.5px;transform:scaleX(0.7886);color:#2b2b2b;">0</span>
<span class="t" style="left:1607.45px;top:951px;font-size:21.5px;transform:scaleX(0.7886);color:#2b2b2b;">176</span>
<span class="t" style="left:1728.99px;top:951px;font-size:21.5px;transform:scaleX(0.7886);color:#2b2b2b;">22</span>
<span class="t" style="left:210.11px;top:1001px;font-size:21.5px;transform:scaleX(0.8257);color:#146c74;">2020</span>
<span class="t" style="left:379.32px;top:1001px;font-size:21.5px;transform:scaleX(0.7886);color:#2b2b2b;">10</span>
<span class="t" style="left:424.57px;top:1001px;font-size:21.5px;transform:scaleX(0.7617);color:#2b2b2b;">1.10.2020.</span>
<span class="t" style="left:536.98px;top:1001px;font-size:21.5px;transform:scaleX(0.7646);color:#2b2b2b;">31.10.2020.</span>
<span class="t" style="left:685.03px;top:1001px;font-size:21.5px;transform:scaleX(0.7696);color:#2b2b2b;">16.300,00</span>
<span class="t" style="left:829.44px;top:1001px;font-size:21.5px;transform:scaleX(0.7668);color:#2b2b2b;">3.900,00</span>
<span class="t" style="left:977.69px;top:1001px;font-size:21.5px;transform:scaleX(0.7748);color:#2b2b2b;">180,00</span>
<span class="t" style="left:1090.03px;top:1001px;font-size:21.5px;transform:scaleX(0.7696);color:#2b2b2b;">25.801,00</span>
<span class="t" style="left:1216.38px;top:1001px;font-size:21.5px;transform:scaleX(0.7717);color:#2b2b2b;">350.000,00</span>
<span class="t" style="left:1383.25px;top:1001px;font-size:21.5px;transform:scaleX(0.7886);color:#2b2b2b;">176</span>
<span class="t" style="left:1514.23px;top:1001px;font-size:21.5px;transform:scaleX(0.7886);color:#2b2b2b;">0</span>
<span class="t" style="left:1607.45px;top:1001px;font-size:21.5px;transform:scaleX(0.7886);color:#2b2b2b;">176</span>
<span class="t" style="left:1728.99px;top:1001px;font-size:21.5px;transform:scaleX(0.7886);color:#2b2b2b;">22</span>
<div class="r" style="left:210.3px;top:361.9px;width:38.8px;height:2px;background:#256b75;"></div>
<div class="r" style="left:284.9px;top:343.3px;width:2.7px;height:2.8px;background:#3a3a3a;border-radius:1px;"></div>
<div class="r" style="left:284.9px;top:352.1px;width:2.7px;height:2.8px;background:#3a3a3a;border-radius:1px;"></div>
<div class="r" style="left:284.9px;top:360.90000000000003px;width:2.7px;height:2.8px;background:#3a3a3a;border-radius:1px;"></div>
<div class="r" style="left:284.9px;top:393.6px;width:2.7px;height:2.8px;background:#3a3a3a;border-radius:1px;"></div>
<div class="r" style="left:284.9px;top:402.40000000000003px;width:2.7px;height:2.8px;background:#3a3a3a;border-radius:1px;"></div>
<div class="r" style="left:284.9px;top:411.20000000000005px;width:2.7px;height:2.8px;background:#3a3a3a;border-radius:1px;"></div>
<div class="r" style="left:154px;top:1034px;width:1610px;height:1px;background:#e3e5e8;"></div>
<div class="r" style="left:154px;top:1046px;width:1610px;height:24.5px;background:#f0f0f0;"></div>
<div class="r" style="left:175px;top:1048px;width:945px;height:19.5px;background:#c1c1c1;"></div>
<svg class="r" style="left:161px;top:1052px" width="7" height="13"><path d="M6.5 0.5 L1 6.5 L6.5 12.5 Z" fill="#a3a3a3"/></svg>
<svg class="r" style="left:1750px;top:1052px" width="7" height="13"><path d="M0.5 0.5 L6 6.5 L0.5 12.5 Z" fill="#505050"/></svg>
</body></html>
